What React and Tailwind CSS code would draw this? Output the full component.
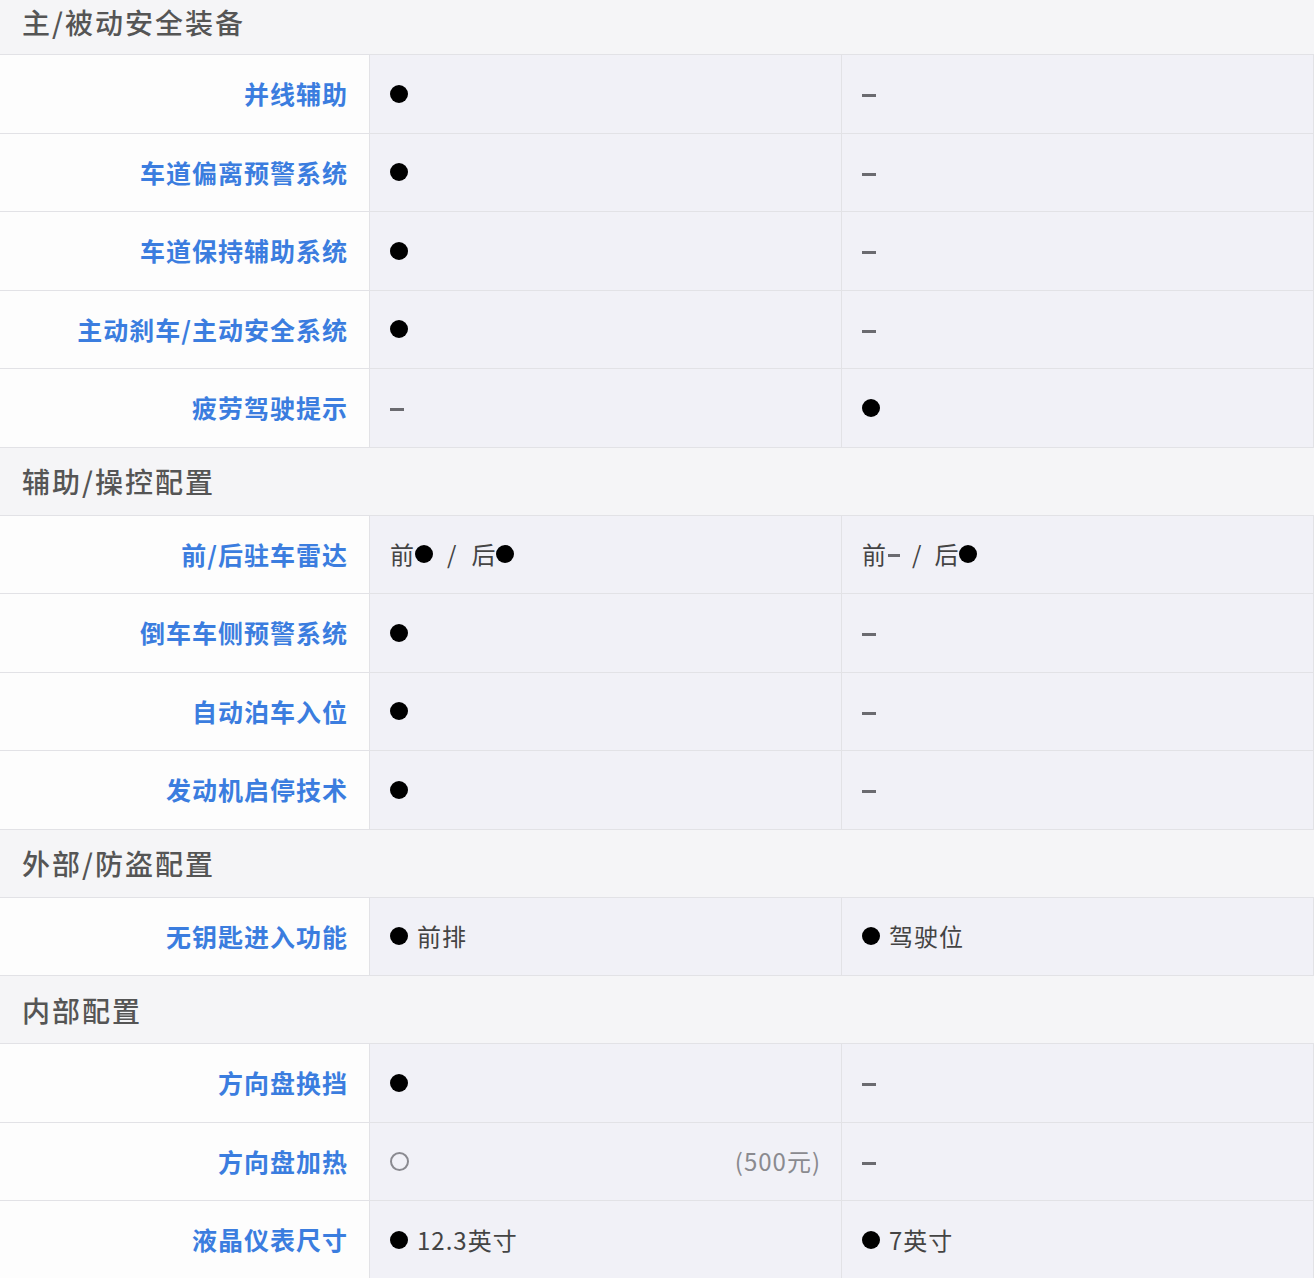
import React from 'react'

const Dot = () => <span className="inline-block w-[18px] h-[18px] rounded-full bg-black shrink-0" />
const Dash = () => <span className="inline-block w-[14px] h-[3px] bg-[#6b6b70] mt-[4px]" />
const Ring = () => <span className="inline-block w-[19px] h-[19px] rounded-full border-2 border-[#8a8a90] shrink-0" />

const sections = [
    {
        title: '主/被动安全装备',
        first: true,
        rows: [
            ['并线辅助', 'dot', 'dash'],
            ['车道偏离预警系统', 'dot', 'dash'],
            ['车道保持辅助系统', 'dot', 'dash'],
            ['主动刹车/主动安全系统', 'dot', 'dash'],
            ['疲劳驾驶提示', 'dash', 'dot'],
        ],
    },
    {
        title: '辅助/操控配置',
        rows: [
            ['前/后驻车雷达', 'radarA', 'radarB'],
            ['倒车车侧预警系统', 'dot', 'dash'],
            ['自动泊车入位', 'dot', 'dash'],
            ['发动机启停技术', 'dot', 'dash'],
        ],
    },
    {
        title: '外部/防盗配置',
        rows: [['无钥匙进入功能', { dot: '前排' }, { dot: '驾驶位' }]],
    },
    {
        title: '内部配置',
        rows: [
            ['方向盘换挡', 'dot', 'dash'],
            ['方向盘加热', 'option', 'dash'],
            ['液晶仪表尺寸', { dot: '12.3英寸' }, { dot: '7英寸' }],
        ],
    },
]

function Value({ v }) {
    if (v === 'dot') return <Dot />
    if (v === 'dash') return <Dash />
    if (v === 'radarA')
        return (
            <span className="flex items-center text-[24px] tracking-[1px] text-[#444]">
                前<Dot /><span className="mx-[14px]">/</span>后<Dot />
            </span>
        )
    if (v === 'radarB')
        return (
            <span className="flex items-center text-[24px] tracking-[1px] text-[#444]">
                前<span className="inline-block w-[12px] h-[3px] bg-[#6b6b70] ml-[1px] mt-[2px]" />
                <span className="mx-[12px]">/</span>后<Dot />
            </span>
        )
    if (v === 'option')
        return (
            <span className="flex items-center justify-between w-full">
                <Ring />
                <span className="text-[24px] tracking-[1px] text-[#8a8a8f]">(500元)</span>
            </span>
        )
    return (
        <span className="flex items-center gap-[9px] text-[24px] tracking-[1px] text-[#444]">
            <Dot />
            <span>{v.dot}</span>
        </span>
    )
}

export default function App() {
    return (
        <div className="w-[1314px] h-[1278px] overflow-hidden bg-[#f5f5f7] font-['Noto_Sans_CJK_SC','Noto_Sans',sans-serif]">
            {sections.map((s) => (
                <div key={s.title}>
                    <div className={`flex items-center px-[22px] border-b border-[#e2e2e6] text-[28px] tracking-[2px] text-[#555] font-medium ${s.first ? 'h-[55px] pb-[10px]' : 'h-[68px]'}`}>
                        {s.title}
                    </div>
                    {s.rows.map((r) => (
                        <div key={r[0]} className="flex h-[78.5px] border-b border-[#e2e2e6]">
                            <div className="w-[370px] shrink-0 bg-[#fdfdfd] border-r border-[#e2e2e6] flex items-center justify-end pr-[21px] text-[25px] tracking-[1px] font-bold text-[#3b7ddf]">
                                {r[0]}
                            </div>
                            <div className="w-[472px] shrink-0 bg-[#f1f1f7] border-r border-[#e2e2e6] flex items-center pl-[20px] pr-[20px]">
                                <Value v={r[1]} />
                            </div>
                            <div className="w-[472px] shrink-0 bg-[#f1f1f7] border-r border-[#e2e2e6] flex items-center pl-[20px] pr-[20px]">
                                <Value v={r[2]} />
                            </div>
                        </div>
                    ))}
                </div>
            ))}
        </div>
    )
}
